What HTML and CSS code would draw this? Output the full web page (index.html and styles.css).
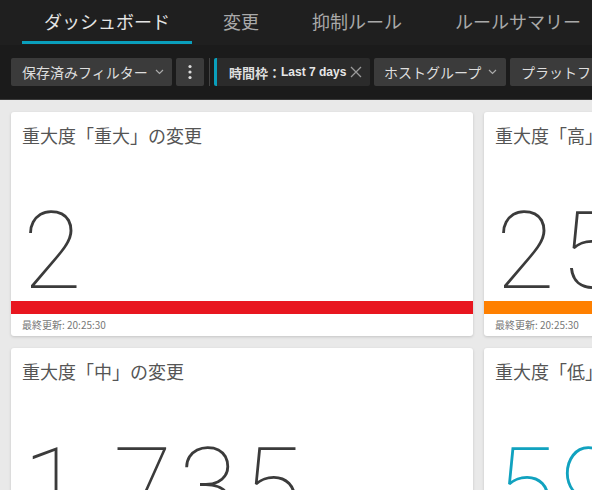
FILE: index.html
```html
<!DOCTYPE html>
<html lang="ja">
<head>
<meta charset="utf-8">
<link rel="stylesheet" href="styles.css">
</head>
<body>
<div class="page">
  <nav class="topnav">
    <div class="tab active">ダッシュボード</div>
    <div class="tab">変更</div>
    <div class="tab">抑制ルール</div>
    <div class="tab">ルールサマリー</div>
  </nav>
  <div class="filterbar">
    <div class="fbtn saved">保存済みフィルター<span class="chev"><svg width="9" height="6" viewBox="0 0 9 6"><path d="M1 1l3.5 3.5L8 1" fill="none" stroke="#aaa" stroke-width="1.2"/></svg></span></div>
    <div class="fbtn more"><svg width="4" height="16" viewBox="0 0 4 16"><circle cx="2" cy="2.5" r="1.6" fill="#ddd"/><circle cx="2" cy="8" r="1.6" fill="#ddd"/><circle cx="2" cy="13.5" r="1.6" fill="#ddd"/></svg></div>
    <div class="sep"></div>
    <div class="fbtn chip"><span class="chip-label">時間枠：</span><span class="chip-val">Last 7 days</span><span class="chip-x"><svg width="12" height="12" viewBox="0 0 12 12"><path d="M1 1l10 10M11 1l-10 10" stroke="#9a9a9a" stroke-width="1.3"/></svg></span></div>
    <div class="fbtn host">ホストグループ<span class="chev"><svg width="9" height="6" viewBox="0 0 9 6"><path d="M1 1l3.5 3.5L8 1" fill="none" stroke="#aaa" stroke-width="1.2"/></svg></span></div>
    <div class="fbtn plat">プラットフォーム<span class="chev"><svg width="9" height="6" viewBox="0 0 9 6"><path d="M1 1l3.5 3.5L8 1" fill="none" stroke="#aaa" stroke-width="1.2"/></svg></span></div>
  </div>
  <main class="grid">
    <section class="card">
      <h2 class="title">重大度「重大」の変更</h2>
      <div class="num">2</div>
      <div class="bar bar-red"></div>
      <div class="foot">最終更新: 20:25:30</div>
    </section>
    <section class="card">
      <h2 class="title">重大度「高」の変更</h2>
      <div class="num">25</div>
      <div class="bar bar-orange"></div>
      <div class="foot">最終更新: 20:25:30</div>
    </section>
    <section class="card">
      <h2 class="title">重大度「中」の変更</h2>
      <div class="num">1,735</div>
      <div class="bar bar-yellow"></div>
      <div class="foot">最終更新: 20:25:30</div>
    </section>
    <section class="card">
      <h2 class="title">重大度「低」の変更</h2>
      <div class="num num-cyan">59</div>
      <div class="bar bar-cyan"></div>
      <div class="foot">最終更新: 20:25:30</div>
    </section>
  </main>
</div>
</body>
</html>
```

FILE: styles.css
```css
html, body {
  margin: 0;
  padding: 0;
}
body {
  background: #e9e9e9;
  font-family: "Noto Sans CJK JP", "Noto Sans", sans-serif;
  width: 592px;
  height: 490px;
  overflow: hidden;
}
.page {
  width: 592px;
  overflow: hidden;
}
.topnav {
  display: flex;
  background: #1f1f1f;
  height: 45px;
  padding-left: 13px;
  white-space: nowrap;
}
.tab {
  flex: none;
  margin-left: 9px;
  padding: 0 22px;
  height: 44px;
  box-sizing: border-box;
  font-size: 18px;
  line-height: 42px;
  color: #a9a9a9;
}
.tab.active {
  color: #e4e4e4;
  border-bottom: 3px solid #0a9fbc;
}
.filterbar {
  display: flex;
  align-items: center;
  background: #1b1b1b;
  height: 54px;
  padding: 0 11px;
  gap: 4px;
  white-space: nowrap;
  border-bottom: 1px solid #3a3a3a;
}
.fbtn {
  flex: none;
  display: flex;
  align-items: center;
  height: 28px;
  box-sizing: border-box;
  background: #3b3b3b;
  border-radius: 2px;
  color: #dedede;
  font-size: 14px;
  padding: 0 11px;
}
.chev {
  display: flex;
  margin-left: 7px;
}
.saved {
  width: 161px;
}
.more {
  width: 28px;
  justify-content: center;
  padding: 0;
}
.sep {
  flex: none;
  width: 1px;
  height: 28px;
  background: #444;
  margin: 0 0 0 1px;
}
.chip {
  background: #2b2b2b;
  border-left: 3px solid #0a9fbc;
  padding: 0 6px 0 12px;
  width: 156px;
}
.chip-label {
  font-weight: 700;
  font-size: 13px;
}
.chip-val {
  font-family: "Liberation Sans", Arial, sans-serif;
  font-weight: 700;
  font-size: 12px;
  color: #e6e6e6;
}
.chip-x {
  display: flex;
  margin-left: 4px;
}
.host {
  width: 132px;
  padding-left: 10px;
}
.grid {
  display: grid;
  grid-template-columns: 462px 462px;
  column-gap: 11px;
  row-gap: 12px;
  padding: 12px 11px;
}
.card {
  display: flex;
  flex-direction: column;
  height: 224px;
  background: #fff;
  border-radius: 3px;
  box-shadow: 0 1px 3px rgba(0, 0, 0, 0.16);
  overflow: hidden;
}
.title {
  margin: 0;
  padding: 12px 11px 0;
  font-size: 18px;
  font-weight: 400;
  line-height: 22px;
  color: #555;
}
.num {
  flex: 1;
  display: flex;
  align-items: flex-end;
  padding-left: 12px;
  margin-bottom: 6px;
  font-family: Roboto, "Liberation Sans", sans-serif;
  font-weight: 100;
  font-size: 107px;
  line-height: 0.8;
  letter-spacing: 6px;
  color: #3b3b3b;
}
.num-cyan {
  color: #11a2bf;
}
.bar {
  height: 13px;
  flex: none;
}
.bar-red { background: #e8161f; }
.bar-orange { background: #ff8000; }
.bar-yellow { background: #f5c400; }
.bar-cyan { background: #11a2bf; }
.foot {
  flex: none;
  height: 22px;
  padding-left: 11px;
  font-size: 10px;
  line-height: 22px;
  color: #777;
}
```
